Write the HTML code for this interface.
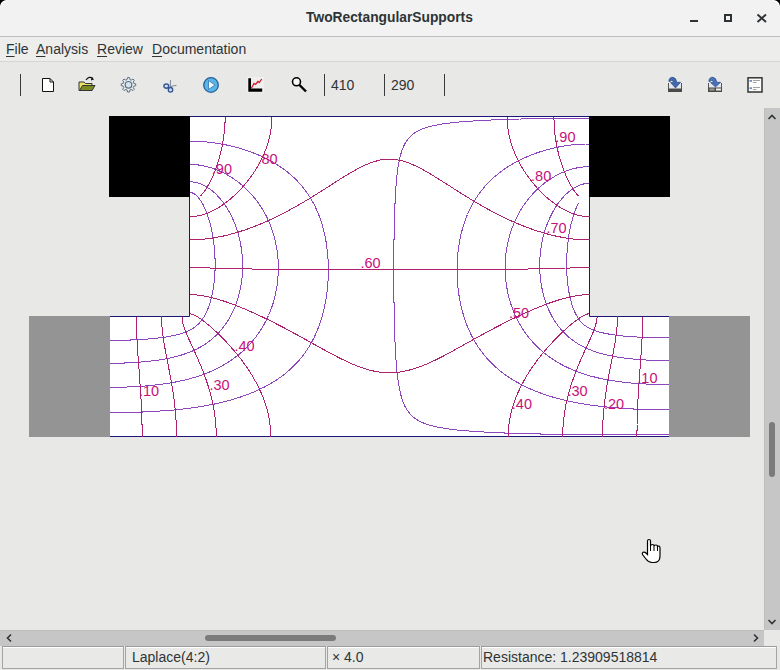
<!DOCTYPE html>
<html><head><meta charset="utf-8">
<style>
*{margin:0;padding:0;box-sizing:border-box}
html,body{width:780px;height:670px;overflow:hidden;background:#e8e8e7;font-family:"Liberation Sans",sans-serif;color:#2e3436}
.abs{position:absolute}
#title{left:0;top:0;width:780px;height:36px;background:#f2f2f2;border-radius:6px 6px 0 0}
#tline{left:0;top:36px;width:780px;height:1px;background:#bdbdbd}
#menubar{left:0;top:37px;width:780px;height:24px;background:#ededec}
#mline{left:0;top:61px;width:780px;height:1px;background:#d6d6d5}
.menu{top:40px;font-size:14px;line-height:18px;color:#2e3436}
.menu u{text-decoration:underline;text-decoration-thickness:1px;text-underline-offset:2px}
.ttxt{font-size:13.8px;line-height:18px;font-weight:bold;color:#2e3436}
.sep{width:1px;height:22px;top:74px;background:#3a3a3a}
.num{top:76px;font-size:14px;line-height:18px;color:#2e3436}
#vscroll{left:764px;top:108px;width:16px;height:522px;background:#c6c6c6;border-left:1px solid #bdbdbd}
#hscroll{left:0;top:630px;width:764px;height:16px;background:#c6c6c6;border-top:1px solid #bdbdbd}
#corner{left:764px;top:630px;width:16px;height:16px;background:#e8e8e7}
#status{left:0;top:646px;width:780px;height:24px;background:#e8e8e7}
.panel{top:646px;height:23px;border:1px solid #a4a4a4;border-top-color:#9c9c9c;box-shadow:inset 0 1px 0 #fff;background:#e9e9e8;font-size:14px;line-height:21px;color:#2e3436;white-space:nowrap}
</style></head><body>
<div class="abs" id="title"></div>
<div class="abs" style="left:0;top:0;width:7px;height:7px;background:radial-gradient(circle at 100% 100%, transparent 5.5px, #fff 6px, #fff 6.5px, #000 7.5px)"></div>
<div class="abs" style="left:773px;top:0;width:7px;height:7px;background:radial-gradient(circle at 0% 100%, transparent 5.5px, #fff 6px, #fff 6.5px, #000 7.5px)"></div>
<div class="abs ttxt" style="left:306px;top:9px;">TwoRectangularSupports</div>
<svg class="abs" style="left:0;top:0" width="780" height="36">
  <rect x="690" y="20" width="8" height="2" fill="#2e3436"/>
  <rect x="725" y="15" width="6" height="6" fill="none" stroke="#2e3436" stroke-width="2"/>
  <path d="M757.5 14.5 L766 22 M766 14.5 L757.5 22" stroke="#2e3436" stroke-width="2"/>
</svg>
<div class="abs" id="tline"></div>
<div class="abs" id="menubar"></div>
<div class="abs" id="mline"></div>
<div class="abs menu" style="left:6px"><u>F</u>ile</div>
<div class="abs menu" style="left:36px"><u>A</u>nalysis</div>
<div class="abs menu" style="left:97px"><u>R</u>eview</div>
<div class="abs menu" style="left:152px"><u>D</u>ocumentation</div>

<!-- toolbar -->
<div class="abs sep" style="left:20px"></div>
<div class="abs sep" style="left:324px"></div>
<div class="abs sep" style="left:384px"></div>
<div class="abs sep" style="left:444px"></div>
<div class="abs num" style="left:331px">410</div>
<div class="abs num" style="left:391px">290</div>
<svg class="abs" style="left:0;top:62px" width="780" height="46" viewBox="0 62 780 46">
  <!-- new doc -->
  <path d="M42.5 78.5 H50 L53.5 82 V91.5 H42.5 Z" fill="#fff" stroke="#111" stroke-width="1"/>
  <path d="M50 78.5 V82 H53.5" fill="none" stroke="#111" stroke-width="1"/>
  <!-- open folder -->
  <path d="M79 82 H84 L85.5 83.5 H92 V90.5 H79 Z" fill="#e8e26a" stroke="#333" stroke-width="1"/>
  <path d="M79.5 90.5 L82.5 85.5 H95 L92 90.5 Z" fill="#7d8a1e" stroke="#333" stroke-width="1"/>
  <path d="M86 80 Q89 75.5 93 78.5" fill="none" stroke="#111" stroke-width="1.2"/>
  <path d="M91.5 77 L94 79.5 L91 80.5 Z" fill="#111"/>
  <!-- gear -->
  <path d="M127.59 77.56 L129.41 77.56 L129.92 79.59 L131.18 80.11 L132.97 79.03 L134.27 80.33 L133.19 82.12 L133.71 83.38 L135.74 83.89 L135.74 85.71 L133.71 86.22 L133.19 87.48 L134.27 89.27 L132.97 90.57 L131.18 89.49 L129.92 90.01 L129.41 92.04 L127.59 92.04 L127.08 90.01 L125.82 89.49 L124.03 90.57 L122.73 89.27 L123.81 87.48 L123.29 86.22 L121.26 85.71 L121.26 83.89 L123.29 83.38 L123.81 82.12 L122.73 80.33 L124.03 79.03 L125.82 80.11 L127.08 79.59 Z" fill="#e6eef3" stroke="#5f6e7b" stroke-width="1"/>
  <circle cx="128.5" cy="84.8" r="3.3" fill="#d6e4ee" stroke="#5f6e7b" stroke-width="1.2"/>
  <!-- scissors -->
  <g>
    <path d="M170.5 80 L170.3 86.5 M176.5 85.3 L170.3 86.5" stroke="#7d8a96" stroke-width="1" fill="none"/>
    <ellipse cx="166.3" cy="86.1" rx="2.4" ry="2.1" fill="#cfe0ff" stroke="#35558f" stroke-width="1.4"/>
    <ellipse cx="170.5" cy="89.8" rx="2.2" ry="2.3" fill="#cfe0ff" stroke="#35558f" stroke-width="1.4"/>
  </g>
  <!-- play -->
  <circle cx="211" cy="85" r="7.3" fill="#5ab4e6" stroke="#235f9a" stroke-width="1.3"/>
  <path d="M208.5 80.5 L215 85 L208.5 89.5 Z" fill="#f4fbff" stroke="#2f74b5" stroke-width="0.8"/>
  <!-- chart -->
  <rect x="247" y="77" width="17" height="16" fill="#efefef"/>
  <path d="M248.3 78.3 H251 V88.6 H262.2 V91.7 H248.3 Z" fill="#000"/>
  <path d="M251.5 88 L254 83.5 L255.5 84.5 L258 81.5 L259.3 82.5 L261.7 79" fill="none" stroke="#d41a2a" stroke-width="1.3"/>
  <!-- magnifier -->
  <circle cx="296.5" cy="81.8" r="4" fill="#f8f8f8" stroke="#000" stroke-width="1.6"/>
  <path d="M299.5 85 L306 91.5" stroke="#000" stroke-width="2.4"/>
  <!-- right icons -->
  <g>
    <path d="M668.5 83 V91.5 H681.5 V83" fill="#e4e8ee" stroke="#555" stroke-width="1"/>
    <rect x="668" y="88.5" width="14" height="3.5" fill="#4a4a4a"/>
    <path d="M668.8 81 Q669.5 76.8 673 77.3 Q676.5 78 676.6 82.3 L680.6 82.3 L675.5 88 L670.6 82.6 L673.6 82.6 Q673.2 80.3 671.5 80.5 Q670 80.8 669.6 82 Z" fill="#3f68ad" stroke="#2a4d8a" stroke-width="0.7"/>
  </g>
  <g>
    <path d="M708.5 83 V91.5 H721.5 V83" fill="#e4e8ee" stroke="#555" stroke-width="1"/>
    <rect x="708" y="87.5" width="14" height="4.5" fill="#4a4a4a"/>
    <rect x="709.5" y="88.5" width="5" height="2" fill="#9aa090"/><rect x="716" y="88.5" width="5" height="2" fill="#f2f4ea"/>
    <path d="M708.8 81 Q709.5 76.8 713 77.3 Q716.5 78 716.6 82.3 L720.6 82.3 L715.5 87 L710.6 82.6 L713.6 82.6 Q713.2 80.3 711.5 80.5 Q710 80.8 709.6 82 Z" fill="#4a72b8" stroke="#2a4d8a" stroke-width="0.7"/>
  </g>
  <g>
    <rect x="748" y="77.8" width="14" height="14.2" fill="#fcfcfc" stroke="#333" stroke-width="1.5"/>
    <rect x="749.5" y="80" width="2.5" height="1.8" fill="#6f8fbf"/>
    <rect x="749.5" y="87.3" width="2.5" height="1.8" fill="#6f8fbf"/>
    <path d="M753 80.5 H760 M753 82.5 H756.5 M753 87.5 H760 M753 89.5 H756.5" stroke="#8a8a8a" stroke-width="0.8"/>
  </g>
</svg>

<!-- plot -->
<svg class="abs" style="left:0;top:0" width="780" height="670">
  <path d="M189.5 116.5 H589.5 V316.5 H669.5 V436.5 H109.5 V316.5 H189.5 Z" fill="#fff" stroke="#1c1478" stroke-width="1"/>
  <g fill="none" stroke="#8c46be" stroke-width="1" shape-rendering="crispEdges"><path d="M109.5 340.4 L111.0 340.4 L112.5 340.4 L114.0 340.3 L115.5 340.3 L117.0 340.3 L118.5 340.3 L120.0 340.3 L121.5 340.2 L123.0 340.2 L124.5 340.2 L126.0 340.1 L127.5 340.1 L129.0 340.0 L130.5 340.0 L132.0 339.9 L133.5 339.9 L135.0 339.8 L136.5 339.7 L138.0 339.7 L139.5 339.6 L141.0 339.5 L142.5 339.4 L144.0 339.3 L145.5 339.2 L147.0 339.1 L148.5 339.0 L150.0 338.9 L151.5 338.7 L153.0 338.6 L154.5 338.4 L156.0 338.3 L157.5 338.1 L159.0 337.9 L160.5 337.7 L162.0 337.5 L163.5 337.3 L165.0 337.1 L166.5 336.9 L168.0 336.6 L169.5 336.4 L171.0 336.1 L172.5 335.8 L174.0 335.5 L175.5 335.1 L177.0 334.7 L178.5 334.3 L180.0 333.9 L181.5 333.5 L183.0 333.0 L184.5 332.4 L186.0 331.9 L187.5 331.2 L189.0 330.5 L190.5 329.8 L191.8 329.0 L193.5 328.0 L194.9 327.0 L196.2 326.0 L197.3 325.0 L198.5 323.9 L199.8 322.5 L201.0 321.1 L202.0 319.8 L202.9 318.5 L203.9 317.0 L204.8 315.5 L205.5 314.1 L206.3 312.5 L207.0 311.0 L207.6 309.5 L208.2 308.0 L208.8 306.5 L209.3 305.0 L209.8 303.5 L210.2 302.0 L210.7 300.5 L211.1 299.0 L211.4 297.5 L211.8 296.0 L212.1 294.5 L212.4 293.0 L212.7 291.5 L213.0 290.0 L213.2 288.5 L213.5 287.0 L213.7 285.5 L213.9 284.0 L214.1 282.5 L214.2 281.0 L214.4 279.5 L214.5 278.0 L214.6 276.5 L214.8 275.0 L214.8 273.5 L214.9 272.0 L215.0 270.5 L215.0 269.0 L215.1 267.5 L215.1 266.0 L215.1 264.5 L215.1 263.0 L215.1 261.5 L215.0 260.0 L215.0 258.5 L214.9 257.0 L214.9 255.5 L214.8 254.0 L214.7 252.5 L214.6 251.0 L214.5 249.5 L214.3 248.0 L214.2 246.5 L214.0 245.0 L213.8 243.5 L213.6 242.0 L213.4 240.5 L213.2 239.0 L213.0 237.5 L212.7 236.0 L212.5 234.5 L212.2 233.0 L211.9 231.5 L211.6 230.0 L211.3 228.5 L210.9 227.0 L210.5 225.5 L210.2 224.0 L209.8 222.5 L209.3 221.0 L208.9 219.5 L208.4 218.0 L207.9 216.5 L207.4 215.0 L206.9 213.5 L206.3 212.0 L205.7 210.5 L205.1 209.0 L204.4 207.5 L203.7 206.0 L203.0 204.6 L202.1 203.0 L201.2 201.5 L200.2 200.0 L199.1 198.5 L198.0 197.2 L196.9 196.0 L195.5 194.8 L194.0 193.7 L192.5 193.0 L191.0 192.6 L189.5 192.4 M109.5 363.2 L111.0 363.2 L112.5 363.2 L114.0 363.2 L115.5 363.2 L117.0 363.2 L118.5 363.2 L120.0 363.1 L121.5 363.1 L123.0 363.0 L124.5 363.0 L126.0 362.9 L127.5 362.9 L129.0 362.8 L130.5 362.7 L132.0 362.7 L133.5 362.6 L135.0 362.5 L136.5 362.4 L138.0 362.3 L139.5 362.2 L141.0 362.0 L142.5 361.9 L144.0 361.8 L145.5 361.6 L147.0 361.5 L148.5 361.3 L150.0 361.2 L151.5 361.0 L153.0 360.8 L154.5 360.6 L156.0 360.4 L157.5 360.2 L159.0 360.0 L160.5 359.8 L162.0 359.5 L163.5 359.3 L165.0 359.0 L166.5 358.7 L168.0 358.4 L169.5 358.1 L171.0 357.8 L172.5 357.4 L174.0 357.1 L175.5 356.7 L177.0 356.3 L178.5 355.9 L180.0 355.5 L181.5 355.0 L183.0 354.5 L184.5 354.0 L186.0 353.5 L187.4 353.0 L189.0 352.4 L190.5 351.8 L192.0 351.2 L193.5 350.5 L195.0 349.8 L196.5 349.1 L198.0 348.3 L199.5 347.5 L201.0 346.7 L202.5 345.8 L203.8 345.0 L205.4 344.0 L206.8 343.0 L208.2 342.0 L209.5 341.0 L210.8 340.0 L212.0 339.0 L213.2 338.0 L214.3 337.0 L215.5 335.9 L217.0 334.5 L218.4 333.0 L219.5 331.8 L220.5 330.7 L221.5 329.5 L222.5 328.3 L223.5 327.0 L224.5 325.7 L225.5 324.3 L226.4 323.0 L227.4 321.5 L228.3 320.0 L229.2 318.5 L230.0 317.1 L230.9 315.5 L231.7 314.0 L232.4 312.5 L233.1 311.0 L233.8 309.5 L234.4 308.0 L235.1 306.5 L235.6 305.0 L236.2 303.5 L236.7 302.0 L237.2 300.5 L237.7 299.0 L238.2 297.5 L238.6 296.0 L239.0 294.5 L239.4 293.0 L239.7 291.5 L240.1 290.0 L240.4 288.5 L240.7 287.0 L241.0 285.5 L241.2 284.0 L241.4 282.5 L241.6 281.0 L241.8 279.5 L242.0 278.0 L242.1 276.5 L242.3 275.0 L242.4 273.5 L242.5 272.0 L242.5 270.5 L242.6 269.0 L242.6 267.5 L242.6 266.0 L242.6 264.5 L242.6 263.0 L242.5 261.5 L242.5 260.0 L242.4 258.5 L242.3 257.0 L242.2 255.5 L242.0 254.0 L241.9 252.5 L241.7 251.0 L241.5 249.5 L241.3 248.0 L241.0 246.5 L240.8 245.0 L240.5 243.5 L240.2 242.0 L239.9 240.5 L239.6 239.0 L239.2 237.5 L238.8 236.0 L238.4 234.5 L238.0 233.0 L237.5 231.5 L237.0 230.0 L236.5 228.5 L236.0 227.0 L235.5 225.6 L234.9 224.0 L234.3 222.5 L233.7 221.0 L233.0 219.5 L232.3 218.0 L231.6 216.5 L230.9 215.0 L230.1 213.5 L229.3 212.0 L228.5 210.7 L227.5 209.0 L226.6 207.5 L225.6 206.0 L224.6 204.5 L223.5 203.0 L222.5 201.6 L221.5 200.4 L220.5 199.2 L219.5 198.0 L218.5 196.9 L217.2 195.5 L216.0 194.3 L214.7 193.0 L213.5 192.0 L212.4 191.0 L211.1 190.0 L209.8 189.0 L208.5 188.1 L207.0 187.2 L205.5 186.3 L204.1 185.5 L202.5 184.7 L201.0 184.1 L199.5 183.5 L198.0 183.1 L196.5 182.7 L195.0 182.3 L193.5 182.1 L192.0 181.9 L190.5 181.8 L189.5 181.8 M109.5 387.3 L111.0 387.3 L112.5 387.3 L114.0 387.3 L115.5 387.3 L117.0 387.3 L118.5 387.3 L120.0 387.2 L121.5 387.2 L123.0 387.2 L124.5 387.1 L126.0 387.1 L127.5 387.0 L129.0 386.9 L130.5 386.9 L132.0 386.8 L133.5 386.7 L135.0 386.7 L136.5 386.6 L138.0 386.5 L139.5 386.4 L141.0 386.3 L142.5 386.2 L144.0 386.1 L145.5 386.0 L147.0 385.8 L148.5 385.7 L150.0 385.6 L151.5 385.4 L153.0 385.3 L154.5 385.1 L156.0 384.9 L157.5 384.8 L159.0 384.6 L160.5 384.4 L162.0 384.2 L163.5 384.0 L165.0 383.8 L166.5 383.5 L168.0 383.3 L169.5 383.1 L171.0 382.8 L172.5 382.6 L174.0 382.3 L175.5 382.0 L177.0 381.7 L178.5 381.4 L180.0 381.1 L181.5 380.8 L183.0 380.4 L184.5 380.1 L186.0 379.7 L187.5 379.3 L189.0 378.9 L190.5 378.5 L192.0 378.1 L193.5 377.7 L195.0 377.2 L196.5 376.8 L198.0 376.3 L199.5 375.8 L201.0 375.3 L202.5 374.7 L204.0 374.2 L205.5 373.6 L207.0 373.0 L208.5 372.4 L210.0 371.8 L211.5 371.1 L212.9 370.5 L214.5 369.7 L216.0 369.0 L217.5 368.3 L219.0 367.5 L220.5 366.7 L222.0 365.9 L223.5 365.0 L225.0 364.2 L226.5 363.3 L228.0 362.3 L229.3 361.5 L230.8 360.5 L232.2 359.5 L233.5 358.6 L235.0 357.5 L236.3 356.5 L237.5 355.6 L238.8 354.5 L240.0 353.5 L241.2 352.5 L242.3 351.5 L243.5 350.4 L245.0 349.0 L246.5 347.6 L248.0 346.0 L249.5 344.5 L250.5 343.4 L251.5 342.2 L252.5 341.1 L253.5 339.9 L254.5 338.6 L255.5 337.4 L256.5 336.0 L257.5 334.7 L258.5 333.3 L259.4 332.0 L260.4 330.5 L261.3 329.0 L262.2 327.5 L263.1 326.0 L264.0 324.5 L264.8 323.0 L265.6 321.5 L266.4 320.0 L267.1 318.5 L267.8 317.0 L268.5 315.5 L269.1 314.0 L269.8 312.5 L270.4 311.0 L270.9 309.5 L271.5 308.0 L272.0 306.5 L272.5 305.1 L273.0 303.5 L273.5 302.0 L273.9 300.5 L274.3 299.0 L274.7 297.5 L275.1 296.0 L275.4 294.5 L275.7 293.0 L276.0 291.5 L276.3 290.0 L276.6 288.5 L276.8 287.0 L277.1 285.5 L277.3 284.0 L277.5 282.5 L277.6 281.0 L277.8 279.5 L277.9 278.0 L278.0 276.5 L278.1 275.0 L278.2 273.5 L278.3 272.0 L278.3 270.5 L278.3 269.0 L278.3 267.5 L278.3 266.0 L278.3 264.5 L278.2 263.0 L278.2 261.5 L278.1 260.0 L278.0 258.5 L277.8 257.0 L277.7 255.5 L277.5 254.0 L277.3 252.5 L277.1 251.0 L276.9 249.5 L276.7 248.0 L276.4 246.5 L276.1 245.0 L275.8 243.5 L275.5 242.0 L275.2 240.5 L274.8 239.0 L274.4 237.5 L274.0 236.0 L273.6 234.5 L273.1 233.0 L272.6 231.5 L272.1 230.0 L271.6 228.5 L271.0 227.0 L270.5 225.6 L269.9 224.0 L269.2 222.5 L268.6 221.0 L267.9 219.5 L267.2 218.0 L266.5 216.6 L265.7 215.0 L264.9 213.5 L264.0 212.0 L263.2 210.5 L262.3 209.0 L261.3 207.5 L260.5 206.2 L259.5 204.7 L258.5 203.3 L257.6 202.0 L256.5 200.5 L255.5 199.3 L254.5 198.0 L253.5 196.8 L252.5 195.6 L251.5 194.5 L250.1 193.0 L249.0 191.8 L247.7 190.5 L246.5 189.3 L245.1 188.0 L244.0 187.0 L242.5 185.6 L241.2 184.5 L240.0 183.5 L238.7 182.5 L237.4 181.5 L236.0 180.5 L234.6 179.5 L233.2 178.5 L231.6 177.5 L230.0 176.5 L228.5 175.6 L227.0 174.7 L225.7 174.0 L224.0 173.1 L222.5 172.4 L221.0 171.7 L219.5 171.0 L218.0 170.3 L216.5 169.7 L215.0 169.2 L213.5 168.6 L212.0 168.1 L210.5 167.6 L209.0 167.2 L207.5 166.8 L206.0 166.4 L204.5 166.1 L203.0 165.8 L201.5 165.5 L200.0 165.3 L198.5 165.0 L197.0 164.9 L195.5 164.7 L194.0 164.6 L192.5 164.5 L191.0 164.5 L189.5 164.5 M109.5 412.6 L111.0 412.6 L112.5 412.6 L114.0 412.6 L115.5 412.6 L117.0 412.6 L118.5 412.6 L120.0 412.5 L121.5 412.5 L123.0 412.5 L124.5 412.5 L126.0 412.5 L127.5 412.4 L129.0 412.4 L130.5 412.4 L132.0 412.3 L133.5 412.3 L135.0 412.2 L136.5 412.2 L138.0 412.2 L139.5 412.1 L141.0 412.0 L142.5 412.0 L144.0 411.9 L145.5 411.9 L147.0 411.8 L148.5 411.7 L150.0 411.7 L151.5 411.6 L153.0 411.5 L154.5 411.4 L156.0 411.3 L157.5 411.2 L159.0 411.1 L160.5 411.0 L162.0 410.9 L163.5 410.8 L165.0 410.7 L166.5 410.6 L168.0 410.5 L169.5 410.4 L171.0 410.2 L172.5 410.1 L174.0 410.0 L175.5 409.8 L177.0 409.7 L178.5 409.5 L180.0 409.4 L181.5 409.2 L183.0 409.0 L184.5 408.8 L186.0 408.7 L187.5 408.5 L189.0 408.3 L190.5 408.1 L192.0 407.9 L193.5 407.7 L195.0 407.5 L196.5 407.2 L198.0 407.0 L199.5 406.8 L201.0 406.5 L202.5 406.3 L204.0 406.0 L205.5 405.8 L207.0 405.5 L208.5 405.2 L210.0 404.9 L211.5 404.6 L213.0 404.3 L214.5 404.0 L216.0 403.7 L217.5 403.3 L219.0 403.0 L220.5 402.7 L222.0 402.3 L223.5 401.9 L225.0 401.6 L226.5 401.2 L228.0 400.8 L229.5 400.4 L231.0 399.9 L232.5 399.5 L234.0 399.1 L235.5 398.6 L237.0 398.1 L238.5 397.7 L240.0 397.2 L241.5 396.7 L243.0 396.1 L244.5 395.6 L246.0 395.1 L247.5 394.5 L249.0 393.9 L250.5 393.3 L252.0 392.7 L253.5 392.1 L254.9 391.5 L256.5 390.8 L258.0 390.1 L259.5 389.4 L261.0 388.7 L262.4 388.0 L264.0 387.2 L265.4 386.5 L267.0 385.6 L268.5 384.8 L269.9 384.0 L271.5 383.1 L273.0 382.2 L274.5 381.2 L276.0 380.3 L277.5 379.3 L279.0 378.2 L280.5 377.2 L282.0 376.1 L283.4 375.0 L284.7 374.0 L286.0 373.0 L287.2 372.0 L288.3 371.0 L289.5 370.0 L291.0 368.6 L292.2 367.5 L293.5 366.2 L294.7 365.0 L296.0 363.7 L297.1 362.5 L298.5 361.0 L299.5 359.8 L300.5 358.6 L301.5 357.4 L302.5 356.1 L303.5 354.8 L304.5 353.5 L305.5 352.1 L306.5 350.6 L307.5 349.1 L308.5 347.5 L309.5 346.0 L310.3 344.5 L311.2 343.0 L312.0 341.5 L312.8 340.0 L313.6 338.5 L314.3 337.0 L315.0 335.6 L315.7 334.0 L316.4 332.5 L317.0 331.1 L317.7 329.5 L318.2 328.0 L318.8 326.5 L319.4 325.0 L319.9 323.5 L320.4 322.0 L320.9 320.5 L321.4 319.0 L321.8 317.5 L322.3 316.0 L322.7 314.5 L323.1 313.0 L323.4 311.5 L323.8 310.0 L324.2 308.5 L324.5 307.0 L324.8 305.5 L325.1 304.0 L325.4 302.5 L325.7 301.0 L325.9 299.5 L326.2 298.0 L326.4 296.5 L326.6 295.0 L326.8 293.5 L327.0 292.0 L327.2 290.5 L327.4 289.0 L327.5 287.5 L327.7 286.0 L327.8 284.5 L327.9 283.0 L328.0 281.5 L328.1 280.0 L328.2 278.5 L328.2 277.0 L328.3 275.5 L328.3 274.0 L328.3 272.5 L328.3 271.0 L328.3 269.5 L328.3 268.0 L328.3 266.5 L328.3 265.0 L328.2 263.5 L328.2 262.0 L328.1 260.5 L328.0 259.0 L327.9 257.5 L327.8 256.0 L327.7 254.5 L327.5 253.0 L327.4 251.5 L327.2 250.0 L327.0 248.5 L326.8 247.0 L326.6 245.5 L326.4 244.0 L326.2 242.5 L325.9 241.0 L325.6 239.5 L325.4 238.0 L325.1 236.5 L324.7 235.0 L324.4 233.5 L324.1 232.0 L323.7 230.5 L323.3 229.0 L322.9 227.5 L322.5 226.0 L322.1 224.5 L321.6 223.0 L321.1 221.5 L320.6 220.0 L320.1 218.5 L319.6 217.0 L319.0 215.5 L318.4 214.0 L317.8 212.5 L317.1 211.0 L316.5 209.5 L315.8 208.0 L315.1 206.5 L314.3 205.0 L313.6 203.5 L312.7 202.0 L312.0 200.7 L311.0 199.0 L310.1 197.5 L309.2 196.0 L308.2 194.5 L307.2 193.0 L306.1 191.5 L305.0 190.0 L304.0 188.7 L303.0 187.5 L302.0 186.2 L301.0 185.0 L300.0 183.9 L298.7 182.5 L297.5 181.2 L296.3 180.0 L295.0 178.7 L293.8 177.5 L292.5 176.3 L291.0 175.0 L289.8 174.0 L288.6 173.0 L287.4 172.0 L286.1 171.0 L284.8 170.0 L283.5 169.0 L282.0 168.0 L280.6 167.0 L279.1 166.0 L277.5 165.0 L276.0 164.0 L274.5 163.1 L273.0 162.3 L271.7 161.5 L270.0 160.6 L268.5 159.8 L267.0 159.0 L265.5 158.3 L264.0 157.5 L262.5 156.8 L261.0 156.1 L259.6 155.5 L258.0 154.8 L256.5 154.2 L255.0 153.6 L253.5 153.0 L252.0 152.4 L250.5 151.9 L249.0 151.3 L247.5 150.8 L246.0 150.3 L244.5 149.8 L243.0 149.3 L241.5 148.9 L240.0 148.4 L238.6 148.0 L237.0 147.6 L235.5 147.2 L234.0 146.8 L232.5 146.4 L231.0 146.0 L229.5 145.7 L228.0 145.4 L226.5 145.0 L225.0 144.7 L223.5 144.4 L222.0 144.1 L220.5 143.9 L219.0 143.6 L217.5 143.4 L216.0 143.1 L214.5 142.9 L213.0 142.7 L211.5 142.5 L210.0 142.4 L208.5 142.2 L207.0 142.0 L205.5 141.9 L204.0 141.8 L202.5 141.6 L201.0 141.5 L199.5 141.4 L198.0 141.4 L196.5 141.3 L195.0 141.2 L193.5 141.2 L192.0 141.2 L190.5 141.2 L189.5 141.2 M669.5 409.8 L668.0 409.8 L666.5 409.8 L665.0 409.8 L663.5 409.8 L662.0 409.7 L660.5 409.7 L659.0 409.7 L657.5 409.7 L656.0 409.7 L654.5 409.6 L653.0 409.6 L651.5 409.6 L650.0 409.5 L648.5 409.5 L647.0 409.5 L645.5 409.4 L644.0 409.4 L642.5 409.3 L641.0 409.3 L639.5 409.2 L638.0 409.2 L636.5 409.1 L635.0 409.0 L633.5 409.0 L632.0 408.9 L630.5 408.8 L629.0 408.7 L627.5 408.6 L626.0 408.5 L624.5 408.5 L623.0 408.4 L621.5 408.3 L620.0 408.1 L618.5 408.0 L617.0 407.9 L615.5 407.8 L614.0 407.7 L612.5 407.5 L611.0 407.4 L609.5 407.3 L608.0 407.1 L606.5 407.0 L605.0 406.8 L603.5 406.7 L602.0 406.5 L600.5 406.3 L599.0 406.2 L597.5 406.0 L596.0 405.8 L594.5 405.6 L593.0 405.4 L591.5 405.2 L590.0 405.0 L588.5 404.7 L587.0 404.5 L585.5 404.3 L584.0 404.0 L582.5 403.8 L581.0 403.5 L579.5 403.3 L578.0 403.0 L576.5 402.7 L575.0 402.4 L573.5 402.1 L572.0 401.8 L570.5 401.5 L569.0 401.2 L567.5 400.9 L566.0 400.5 L564.5 400.2 L563.0 399.8 L561.5 399.4 L560.0 399.0 L558.5 398.6 L557.0 398.2 L555.5 397.8 L554.0 397.4 L552.5 397.0 L551.0 396.5 L549.5 396.1 L548.0 395.6 L546.5 395.1 L545.0 394.6 L543.5 394.1 L542.0 393.5 L540.5 393.0 L539.0 392.5 L537.5 391.9 L536.0 391.3 L534.5 390.7 L533.0 390.1 L531.5 389.4 L530.0 388.8 L528.5 388.1 L527.0 387.4 L525.5 386.7 L524.1 386.0 L522.5 385.2 L521.1 384.5 L519.5 383.6 L518.0 382.8 L516.5 382.0 L515.0 381.1 L513.5 380.2 L512.0 379.3 L510.5 378.4 L509.2 377.5 L507.7 376.5 L506.3 375.5 L505.0 374.6 L503.5 373.5 L502.2 372.5 L500.9 371.5 L499.7 370.5 L498.4 369.5 L497.3 368.5 L496.1 367.5 L495.0 366.5 L493.5 365.1 L492.4 364.0 L491.0 362.7 L489.9 361.5 L488.5 360.0 L487.1 358.5 L486.0 357.2 L485.0 356.1 L484.0 354.9 L483.0 353.6 L482.0 352.3 L481.0 351.0 L480.0 349.6 L479.0 348.2 L478.0 346.7 L477.0 345.1 L476.0 343.5 L475.1 342.0 L474.2 340.5 L473.4 339.0 L472.5 337.5 L471.8 336.0 L471.0 334.5 L470.3 333.0 L469.6 331.5 L468.9 330.0 L468.3 328.5 L467.6 327.0 L467.0 325.5 L466.4 324.0 L465.9 322.5 L465.4 321.0 L464.8 319.5 L464.3 318.0 L463.9 316.5 L463.4 315.0 L463.0 313.5 L462.5 312.0 L462.1 310.5 L461.8 309.0 L461.4 307.5 L461.0 306.0 L460.7 304.5 L460.4 303.0 L460.1 301.5 L459.8 300.0 L459.5 298.5 L459.3 297.0 L459.0 295.5 L458.8 294.0 L458.6 292.5 L458.4 291.0 L458.2 289.5 L458.0 288.0 L457.9 286.5 L457.7 285.0 L457.6 283.5 L457.5 282.0 L457.4 280.5 L457.3 279.0 L457.2 277.5 L457.2 276.0 L457.1 274.5 L457.1 273.0 L457.1 271.5 L457.1 270.0 L457.1 268.5 L457.1 267.0 L457.1 265.5 L457.2 264.0 L457.2 262.5 L457.3 261.0 L457.4 259.5 L457.5 258.0 L457.6 256.5 L457.7 255.0 L457.9 253.5 L458.0 252.0 L458.2 250.5 L458.4 249.0 L458.6 247.5 L458.8 246.0 L459.1 244.5 L459.3 243.0 L459.6 241.5 L459.8 240.0 L460.1 238.5 L460.5 237.0 L460.8 235.5 L461.1 234.0 L461.5 232.5 L461.9 231.0 L462.3 229.5 L462.7 228.0 L463.2 226.5 L463.6 225.0 L464.1 223.5 L464.6 222.0 L465.1 220.5 L465.7 219.0 L466.2 217.5 L466.8 216.0 L467.5 214.5 L468.1 213.0 L468.8 211.5 L469.5 210.0 L470.2 208.5 L471.0 207.0 L471.7 205.5 L472.5 204.1 L473.4 202.5 L474.3 201.0 L475.2 199.5 L476.2 198.0 L477.0 196.7 L478.0 195.3 L478.9 194.0 L480.0 192.5 L481.0 191.2 L482.0 189.9 L483.0 188.7 L484.0 187.5 L485.0 186.3 L486.0 185.2 L487.1 184.0 L488.5 182.5 L490.0 181.0 L491.5 179.6 L492.7 178.5 L494.0 177.3 L495.5 176.0 L496.7 175.0 L497.9 174.0 L499.2 173.0 L500.5 172.0 L501.8 171.0 L503.2 170.0 L504.5 169.1 L506.0 168.1 L507.5 167.1 L509.0 166.1 L510.5 165.2 L512.0 164.3 L513.4 163.5 L515.0 162.6 L516.5 161.8 L518.0 161.0 L519.5 160.3 L521.0 159.5 L522.5 158.8 L524.0 158.1 L525.5 157.4 L527.0 156.8 L528.5 156.1 L530.0 155.5 L531.5 154.9 L533.0 154.3 L534.5 153.8 L536.0 153.2 L537.5 152.7 L539.0 152.2 L540.5 151.7 L542.0 151.2 L543.5 150.8 L545.0 150.3 L546.5 149.9 L548.0 149.5 L549.5 149.1 L551.0 148.7 L552.5 148.4 L554.0 148.0 L555.5 147.7 L557.0 147.3 L558.5 147.0 L560.0 146.7 L561.5 146.5 L563.0 146.2 L564.5 146.0 L566.0 145.7 L567.5 145.5 L569.0 145.3 L570.5 145.1 L572.0 144.9 L573.5 144.8 L575.0 144.6 L576.5 144.5 L578.0 144.4 L579.5 144.3 L581.0 144.2 L582.5 144.1 L584.0 144.1 L585.5 144.0 L587.0 144.0 L588.5 144.0 L589.5 144.0 M669.5 384.6 L668.0 384.6 L666.5 384.6 L665.0 384.6 L663.5 384.6 L662.0 384.6 L660.5 384.5 L659.0 384.5 L657.5 384.5 L656.0 384.4 L654.5 384.4 L653.0 384.3 L651.5 384.3 L650.0 384.2 L648.5 384.2 L647.0 384.1 L645.5 384.0 L644.0 383.9 L642.5 383.8 L641.0 383.7 L639.5 383.6 L638.0 383.5 L636.5 383.4 L635.0 383.3 L633.5 383.2 L632.0 383.1 L630.5 382.9 L629.0 382.8 L627.5 382.6 L626.0 382.5 L624.5 382.3 L623.0 382.1 L621.5 382.0 L620.0 381.8 L618.5 381.6 L617.0 381.4 L615.5 381.1 L614.0 380.9 L612.5 380.7 L611.0 380.4 L609.5 380.2 L608.0 379.9 L606.5 379.7 L605.0 379.4 L603.5 379.1 L602.0 378.8 L600.5 378.5 L599.0 378.1 L597.5 377.8 L596.0 377.4 L594.5 377.0 L593.0 376.7 L591.5 376.3 L590.0 375.9 L588.5 375.4 L587.0 375.0 L585.5 374.5 L584.0 374.0 L582.5 373.6 L581.0 373.0 L579.5 372.5 L578.0 372.0 L576.5 371.4 L575.0 370.8 L573.5 370.2 L572.0 369.6 L570.5 368.9 L569.0 368.2 L567.5 367.5 L566.0 366.8 L564.5 366.1 L563.0 365.3 L561.5 364.5 L560.0 363.7 L558.5 362.8 L557.1 362.0 L555.5 361.0 L554.0 360.1 L552.5 359.1 L551.0 358.1 L549.5 357.0 L548.1 356.0 L546.8 355.0 L545.5 354.0 L544.2 353.0 L543.0 352.0 L541.9 351.0 L540.7 350.0 L539.5 348.9 L538.0 347.5 L536.5 346.0 L535.0 344.5 L533.6 343.0 L532.5 341.8 L531.5 340.7 L530.5 339.5 L529.5 338.3 L528.5 337.1 L527.5 335.8 L526.5 334.5 L525.5 333.1 L524.5 331.7 L523.5 330.2 L522.5 328.7 L521.5 327.1 L520.5 325.5 L519.7 324.0 L518.8 322.5 L518.0 321.0 L517.2 319.5 L516.5 318.0 L515.8 316.5 L515.1 315.0 L514.4 313.5 L513.8 312.0 L513.2 310.5 L512.6 309.0 L512.1 307.5 L511.5 306.0 L511.0 304.5 L510.5 303.0 L510.1 301.5 L509.6 300.0 L509.2 298.5 L508.8 297.0 L508.4 295.5 L508.1 294.0 L507.8 292.5 L507.5 291.0 L507.2 289.5 L506.9 288.0 L506.6 286.5 L506.4 285.0 L506.2 283.5 L506.0 282.0 L505.9 280.5 L505.7 279.0 L505.6 277.5 L505.5 276.0 L505.4 274.5 L505.3 273.0 L505.2 271.5 L505.2 270.0 L505.2 268.5 L505.2 267.0 L505.2 265.5 L505.2 264.0 L505.3 262.5 L505.4 261.0 L505.5 259.5 L505.6 258.0 L505.7 256.5 L505.9 255.0 L506.0 253.5 L506.2 252.0 L506.4 250.5 L506.7 249.0 L506.9 247.5 L507.2 246.0 L507.5 244.5 L507.8 243.0 L508.1 241.5 L508.5 240.0 L508.8 238.5 L509.2 237.0 L509.7 235.5 L510.1 234.0 L510.6 232.5 L511.0 231.0 L511.6 229.5 L512.1 228.0 L512.7 226.5 L513.2 225.0 L513.9 223.5 L514.5 222.0 L515.2 220.5 L515.9 219.0 L516.6 217.5 L517.4 216.0 L518.1 214.5 L519.0 213.0 L519.8 211.5 L520.7 210.0 L521.5 208.7 L522.5 207.1 L523.5 205.6 L524.5 204.2 L525.5 202.8 L526.4 201.5 L527.5 200.1 L528.5 198.8 L529.5 197.6 L530.5 196.4 L531.5 195.3 L532.7 194.0 L534.0 192.6 L535.1 191.5 L536.5 190.1 L537.6 189.0 L539.0 187.7 L540.4 186.5 L541.6 185.5 L542.8 184.5 L544.0 183.5 L545.3 182.5 L546.7 181.5 L548.0 180.6 L549.5 179.6 L551.0 178.6 L552.5 177.7 L554.0 176.8 L555.3 176.0 L557.0 175.1 L558.5 174.3 L560.0 173.6 L561.5 172.9 L563.0 172.3 L564.5 171.6 L566.0 171.1 L567.5 170.5 L569.0 170.0 L570.5 169.5 L572.0 169.1 L573.5 168.7 L575.0 168.3 L576.5 168.0 L578.0 167.7 L579.5 167.5 L581.0 167.3 L582.5 167.1 L584.0 166.9 L585.5 166.8 L587.0 166.7 L588.5 166.7 L589.5 166.7 M669.5 360.7 L668.0 360.7 L666.5 360.7 L665.0 360.6 L663.5 360.6 L662.0 360.6 L660.5 360.6 L659.0 360.5 L657.5 360.5 L656.0 360.5 L654.5 360.4 L653.0 360.4 L651.5 360.3 L650.0 360.2 L648.5 360.2 L647.0 360.1 L645.5 360.0 L644.0 359.9 L642.5 359.8 L641.0 359.7 L639.5 359.6 L638.0 359.5 L636.5 359.4 L635.0 359.2 L633.5 359.1 L632.0 358.9 L630.5 358.8 L629.0 358.6 L627.5 358.4 L626.0 358.3 L624.5 358.1 L623.0 357.9 L621.5 357.7 L620.0 357.4 L618.5 357.2 L617.0 357.0 L615.5 356.7 L614.0 356.4 L612.5 356.1 L611.0 355.8 L609.5 355.5 L608.0 355.2 L606.5 354.9 L605.0 354.5 L603.5 354.1 L602.0 353.7 L600.5 353.3 L599.0 352.9 L597.5 352.4 L596.0 351.9 L594.5 351.4 L593.0 350.9 L591.5 350.3 L590.0 349.7 L588.5 349.1 L587.1 348.5 L585.5 347.8 L584.0 347.0 L582.5 346.3 L581.0 345.5 L579.5 344.7 L578.0 343.8 L576.5 342.8 L575.2 342.0 L573.8 341.0 L572.5 340.1 L571.1 339.0 L569.8 338.0 L568.6 337.0 L567.5 336.0 L566.0 334.6 L564.8 333.5 L563.5 332.1 L562.4 331.0 L561.1 329.5 L560.0 328.2 L559.0 327.0 L558.0 325.7 L557.0 324.3 L556.1 323.0 L555.1 321.5 L554.1 320.0 L553.2 318.5 L552.3 317.0 L551.5 315.5 L550.7 314.0 L550.0 312.6 L549.2 311.0 L548.6 309.5 L547.9 308.0 L547.3 306.5 L546.7 305.0 L546.1 303.5 L545.6 302.0 L545.1 300.5 L544.6 299.0 L544.2 297.5 L543.7 296.0 L543.3 294.5 L543.0 293.0 L542.6 291.5 L542.3 290.0 L542.0 288.5 L541.7 287.0 L541.4 285.5 L541.1 284.0 L540.9 282.5 L540.7 281.0 L540.5 279.5 L540.4 278.0 L540.2 276.5 L540.1 275.0 L540.0 273.5 L539.9 272.0 L539.8 270.5 L539.8 269.0 L539.7 267.5 L539.7 266.0 L539.7 264.5 L539.7 263.0 L539.8 261.5 L539.8 260.0 L539.9 258.5 L540.0 257.0 L540.1 255.5 L540.3 254.0 L540.4 252.5 L540.6 251.0 L540.8 249.5 L541.0 248.0 L541.2 246.5 L541.5 245.0 L541.8 243.5 L542.0 242.0 L542.4 240.5 L542.7 239.0 L543.0 237.5 L543.4 236.0 L543.8 234.5 L544.2 233.0 L544.7 231.5 L545.1 230.0 L545.6 228.5 L546.1 227.0 L546.7 225.5 L547.2 224.0 L547.8 222.5 L548.4 221.0 L549.1 219.5 L549.7 218.0 L550.5 216.5 L551.2 215.0 L552.0 213.5 L552.8 212.0 L553.5 210.7 L554.5 209.0 L555.4 207.5 L556.4 206.0 L557.4 204.5 L558.4 203.0 L559.5 201.6 L560.5 200.3 L561.5 199.1 L562.5 197.9 L563.8 196.5 L565.0 195.2 L566.2 194.0 L567.5 192.9 L569.0 191.6 L570.3 190.5 L571.7 189.5 L573.0 188.6 L574.5 187.7 L576.0 186.9 L577.5 186.1 L578.9 185.5 L580.5 184.9 L582.0 184.4 L583.5 184.0 L585.0 183.7 L586.5 183.5 L588.0 183.4 L589.5 183.3 M669.5 337.9 L668.0 337.9 L666.5 337.9 L665.0 337.9 L663.5 337.9 L662.0 337.9 L660.5 337.8 L659.0 337.8 L657.5 337.8 L656.0 337.8 L654.5 337.7 L653.0 337.7 L651.5 337.7 L650.0 337.6 L648.5 337.6 L647.0 337.5 L645.5 337.5 L644.0 337.4 L642.5 337.3 L641.0 337.3 L639.5 337.2 L638.0 337.1 L636.5 337.0 L635.0 336.9 L633.5 336.8 L632.0 336.7 L630.5 336.6 L629.0 336.5 L627.5 336.4 L626.0 336.3 L624.5 336.1 L623.0 336.0 L621.5 335.8 L620.0 335.7 L618.5 335.5 L617.0 335.3 L615.5 335.1 L614.0 334.9 L612.5 334.7 L611.0 334.4 L609.5 334.2 L608.0 333.9 L606.5 333.6 L605.0 333.3 L603.5 333.0 L602.0 332.7 L600.5 332.3 L599.0 331.9 L597.5 331.4 L596.0 330.9 L594.5 330.4 L593.0 329.8 L591.5 329.2 L590.0 328.5 L588.5 327.7 L587.0 326.9 L585.7 326.0 L584.3 325.0 L583.1 324.0 L582.0 322.9 L580.6 321.5 L579.5 320.1 L578.5 318.8 L577.7 317.5 L576.8 316.0 L576.0 314.6 L575.2 313.0 L574.5 311.5 L573.9 310.0 L573.3 308.5 L572.7 307.0 L572.2 305.5 L571.8 304.0 L571.3 302.5 L570.9 301.0 L570.5 299.5 L570.2 298.0 L569.8 296.5 L569.5 295.0 L569.2 293.5 L568.9 292.0 L568.7 290.5 L568.4 289.0 L568.2 287.5 L568.0 286.0 L567.8 284.5 L567.6 283.0 L567.5 281.5 L567.3 280.0 L567.2 278.5 L567.1 277.0 L567.0 275.5 L566.9 274.0 L566.8 272.5 L566.8 271.0 L566.7 269.5 L566.7 268.0 L566.6 266.5 L566.6 265.0 L566.6 263.5 L566.6 262.0 L566.7 260.5 L566.7 259.0 L566.8 257.5 L566.8 256.0 L566.9 254.5 L567.0 253.0 L567.1 251.5 L567.2 250.0 L567.3 248.5 L567.4 247.0 L567.6 245.5 L567.7 244.0 L567.9 242.5 L568.1 241.0 L568.3 239.5 L568.5 238.0 L568.7 236.5 L568.9 235.0 L569.2 233.5 L569.5 232.0 L569.7 230.5 L570.0 229.0 L570.3 227.5 L570.7 226.0 L571.0 224.5 L571.4 223.0 L571.8 221.5 L572.2 220.0 L572.6 218.5 L573.0 217.1 L573.5 215.5 L574.0 214.0 L574.5 212.5 L575.0 211.1 L575.6 209.5 L576.2 208.0 L576.9 206.5 L577.5 205.1 L578.3 203.5 L578.6 203.0 M669.5 434.9 L668.0 434.9 L666.5 434.9 L665.0 434.9 L663.5 434.9 L662.0 434.9 L660.5 434.9 L659.0 434.9 L657.5 434.9 L656.0 434.9 L654.5 434.9 L653.0 434.9 L651.5 434.9 L650.0 434.9 L648.5 434.9 L647.0 434.9 L645.5 434.9 L644.0 434.9 L642.5 434.9 L641.0 434.9 L639.5 434.9 L638.0 434.9 L636.5 434.9 L635.0 434.9 L633.5 434.9 L632.0 434.9 L630.5 434.9 L629.0 434.9 L627.5 434.9 L626.0 434.9 L624.5 434.9 L623.0 434.8 L621.5 434.8 L620.0 434.8 L618.5 434.8 L617.0 434.8 L615.5 434.8 L614.0 434.8 L612.5 434.8 L611.0 434.8 L609.5 434.8 L608.0 434.8 L606.5 434.8 L605.0 434.8 L603.5 434.7 L602.0 434.7 L600.5 434.7 L599.0 434.7 L597.5 434.7 L596.0 434.7 L594.5 434.7 L593.0 434.7 L591.5 434.7 L590.0 434.6 L588.5 434.6 L587.0 434.6 L585.5 434.6 L584.0 434.6 L582.5 434.6 L581.0 434.6 L579.5 434.5 L578.0 434.5 L576.5 434.5 L575.0 434.5 L573.5 434.5 L572.0 434.5 L570.5 434.4 L569.0 434.4 L567.5 434.4 L566.0 434.4 L564.5 434.4 L563.0 434.3 L561.5 434.3 L560.0 434.3 L558.5 434.3 L557.0 434.3 L555.5 434.2 L554.0 434.2 L552.5 434.2 L551.0 434.2 L549.5 434.1 L548.0 434.1 L546.5 434.1 L545.0 434.1 L543.5 434.0 L542.0 434.0 L540.5 434.0 L539.0 433.9 L537.5 433.9 L536.0 433.9 L534.5 433.8 L533.0 433.8 L531.5 433.8 L530.0 433.7 L528.5 433.7 L527.0 433.7 L525.5 433.6 L524.0 433.6 L522.5 433.5 L521.0 433.5 L519.5 433.5 L518.0 433.4 L516.5 433.4 L515.0 433.3 L513.5 433.3 L512.0 433.2 L510.5 433.2 L509.0 433.1 L507.5 433.1 L506.0 433.0 L504.5 433.0 L503.0 432.9 L501.5 432.9 L500.0 432.8 L498.5 432.7 L497.0 432.7 L495.5 432.6 L494.0 432.5 L492.5 432.5 L491.0 432.4 L489.5 432.3 L488.0 432.2 L486.5 432.2 L485.0 432.1 L483.5 432.0 L482.0 431.9 L480.5 431.8 L479.0 431.7 L477.5 431.6 L476.0 431.6 L474.5 431.5 L473.0 431.3 L471.5 431.2 L470.0 431.1 L468.5 431.0 L467.0 430.9 L465.5 430.8 L464.0 430.6 L462.5 430.5 L461.0 430.4 L459.5 430.2 L458.0 430.1 L456.5 429.9 L455.0 429.7 L453.5 429.6 L452.0 429.4 L450.5 429.2 L449.0 429.0 L447.5 428.8 L446.0 428.6 L444.5 428.3 L443.0 428.1 L441.5 427.8 L440.0 427.6 L438.5 427.3 L437.0 427.0 L435.5 426.6 L434.0 426.3 L432.5 425.9 L431.0 425.5 L429.5 425.1 L428.0 424.6 L426.5 424.1 L425.0 423.6 L423.5 423.0 L422.0 422.4 L420.5 421.7 L419.0 420.9 L417.5 420.0 L416.0 419.1 L414.5 418.0 L413.2 417.0 L412.1 416.0 L411.0 414.9 L409.7 413.5 L408.5 412.0 L407.5 410.6 L406.5 409.1 L405.6 407.5 L404.8 406.0 L404.1 404.5 L403.5 403.0 L402.9 401.5 L402.4 400.0 L401.9 398.5 L401.4 397.0 L401.0 395.5 L400.6 394.0 L400.3 392.5 L399.9 391.0 L399.6 389.5 L399.3 388.0 L399.1 386.5 L398.8 385.0 L398.6 383.5 L398.3 382.0 L398.1 380.5 L397.9 379.0 L397.7 377.5 L397.5 376.0 L397.3 374.5 L397.2 373.0 L397.0 371.5 L396.9 370.0 L396.7 368.5 L396.6 367.0 L396.5 365.5 L396.3 364.0 L396.2 362.5 L396.1 361.0 L396.0 359.5 L395.9 358.0 L395.8 356.5 L395.7 355.0 L395.6 353.5 L395.5 352.0 L395.4 350.5 L395.3 349.0 L395.3 347.5 L395.2 346.0 L395.1 344.5 L395.1 343.0 L395.0 341.5 L394.9 340.0 L394.9 338.5 L394.8 337.0 L394.8 335.5 L394.7 334.0 L394.6 332.5 L394.6 331.0 L394.5 329.5 L394.5 328.0 L394.5 326.5 L394.4 325.0 L394.4 323.5 L394.3 322.0 L394.3 320.5 L394.3 319.0 L394.2 317.5 L394.2 316.0 L394.2 314.5 L394.1 313.0 L394.1 311.5 L394.1 310.0 L394.0 308.5 L394.0 307.0 L394.0 305.5 L394.0 304.0 L394.0 302.5 L393.9 301.0 L393.9 299.5 L393.9 298.0 L393.9 296.5 L393.9 295.0 L393.8 293.5 L393.8 292.0 L393.8 290.5 L393.8 289.0 L393.8 287.5 L393.8 286.0 L393.8 284.5 L393.8 283.0 L393.8 281.5 L393.8 280.0 L393.8 278.5 L393.7 277.0 L393.7 275.5 L393.7 274.0 L393.7 272.5 L393.7 271.0 L393.7 269.5 L393.7 268.0 L393.7 266.5 L393.7 265.0 L393.8 263.5 L393.8 262.0 L393.8 260.5 L393.8 259.0 L393.8 257.5 L393.8 256.0 L393.8 254.5 L393.8 253.0 L393.8 251.5 L393.8 250.0 L393.9 248.5 L393.9 247.0 L393.9 245.5 L393.9 244.0 L393.9 242.5 L393.9 241.0 L394.0 239.5 L394.0 238.0 L394.0 236.5 L394.0 235.0 L394.1 233.5 L394.1 232.0 L394.1 230.5 L394.2 229.0 L394.2 227.5 L394.2 226.0 L394.3 224.5 L394.3 223.0 L394.3 221.5 L394.4 220.0 L394.4 218.5 L394.5 217.0 L394.5 215.5 L394.6 214.0 L394.6 212.5 L394.7 211.0 L394.7 209.5 L394.8 208.0 L394.8 206.5 L394.9 205.0 L395.0 203.5 L395.0 202.0 L395.1 200.5 L395.2 199.0 L395.3 197.5 L395.3 196.0 L395.4 194.5 L395.5 193.0 L395.6 191.5 L395.7 190.0 L395.8 188.5 L395.9 187.0 L396.1 185.5 L396.2 184.0 L396.3 182.5 L396.4 181.0 L396.6 179.5 L396.7 178.0 L396.9 176.5 L397.0 175.0 L397.2 173.5 L397.4 172.0 L397.6 170.5 L397.8 169.0 L398.0 167.5 L398.3 166.0 L398.5 164.5 L398.8 163.0 L399.1 161.5 L399.4 160.0 L399.7 158.5 L400.1 157.0 L400.4 155.5 L400.9 154.0 L401.3 152.5 L401.8 151.0 L402.3 149.5 L402.9 148.0 L403.5 146.6 L404.3 145.0 L405.0 143.6 L405.9 142.0 L406.9 140.5 L408.0 139.1 L409.0 137.9 L410.3 136.5 L411.5 135.4 L413.0 134.2 L414.5 133.1 L416.0 132.1 L417.5 131.2 L418.9 130.5 L420.5 129.8 L422.0 129.1 L423.5 128.5 L425.0 128.0 L426.5 127.5 L428.0 127.1 L429.5 126.7 L431.0 126.3 L432.5 125.9 L434.0 125.6 L435.5 125.3 L437.0 125.0 L438.5 124.7 L440.0 124.4 L441.5 124.2 L443.0 123.9 L444.5 123.7 L446.0 123.5 L447.5 123.3 L449.0 123.1 L450.5 122.9 L452.0 122.8 L453.5 122.6 L455.0 122.4 L456.5 122.3 L458.0 122.1 L459.5 122.0 L461.0 121.9 L462.5 121.7 L464.0 121.6 L465.5 121.5 L467.0 121.4 L468.5 121.3 L470.0 121.2 L471.5 121.1 L473.0 121.0 L474.5 120.9 L476.0 120.8 L477.5 120.7 L479.0 120.6 L480.5 120.5 L482.0 120.4 L483.5 120.4 L485.0 120.3 L486.5 120.2 L488.0 120.1 L489.5 120.1 L491.0 120.0 L492.5 119.9 L494.0 119.9 L495.5 119.8 L497.0 119.7 L498.5 119.7 L500.0 119.6 L501.5 119.6 L503.0 119.5 L504.5 119.5 L506.0 119.4 L507.5 119.4 L509.0 119.3 L510.5 119.3 L512.0 119.2 L513.5 119.2 L515.0 119.1 L516.5 119.1 L518.0 119.1 L519.5 119.0 L521.0 119.0 L522.5 118.9 L524.0 118.9 L525.5 118.9 L527.0 118.8 L528.5 118.8 L530.0 118.8 L531.5 118.7 L533.0 118.7 L534.5 118.7 L536.0 118.6 L537.5 118.6 L539.0 118.6 L540.5 118.6 L542.0 118.5 L543.5 118.5 L545.0 118.5 L546.5 118.5 L548.0 118.4 L549.5 118.4 L551.0 118.4 L552.5 118.4 L554.0 118.4 L555.5 118.3 L557.0 118.3 L558.5 118.3 L560.0 118.3 L561.5 118.3 L563.0 118.3 L564.5 118.3 L566.0 118.2 L567.5 118.2 L569.0 118.2 L570.5 118.2 L572.0 118.2 L573.5 118.2 L575.0 118.2 L576.5 118.2 L578.0 118.2 L579.5 118.2 L581.0 118.2 L582.5 118.2 L584.0 118.1 L585.5 118.1 L587.0 118.1 L588.5 118.1 L589.5 118.1"/></g>
  <g fill="none" stroke="#b02070" stroke-width="1" shape-rendering="crispEdges"><path d="M142.1 436.5 L142.1 435.0 L142.1 433.5 L142.1 432.0 L142.0 430.5 L142.0 429.0 L142.0 427.5 L142.0 426.0 L142.0 424.5 L141.9 423.0 L141.9 421.5 L141.9 420.0 L141.8 418.5 L141.8 417.0 L141.7 415.5 L141.7 414.0 L141.6 412.5 L141.6 411.0 L141.5 409.5 L141.4 408.0 L141.4 406.5 L141.3 405.0 L141.2 403.5 L141.1 402.0 L141.1 400.5 L141.0 399.0 L140.9 397.5 L140.8 396.0 L140.7 394.5 L140.6 393.0 L140.5 391.5 L140.4 390.0 L140.4 388.5 L140.3 387.0 L140.2 385.5 L140.0 384.0 L139.9 382.5 L139.8 381.0 L139.7 379.5 L139.6 378.0 L139.5 376.5 L139.4 375.0 L139.3 373.5 L139.2 372.0 L139.1 370.5 L139.0 369.0 L138.8 367.5 L138.7 366.0 L138.6 364.5 L138.5 363.0 L138.4 361.5 L138.3 360.0 L138.2 358.5 L138.1 357.0 L138.0 355.5 L137.9 354.0 L137.8 352.5 L137.7 351.0 L137.6 349.5 L137.5 348.0 L137.4 346.5 L137.3 345.0 L137.2 343.5 L137.1 342.0 L137.1 340.5 L137.0 339.0 L136.9 337.5 L136.8 336.0 L136.8 334.5 L136.7 333.0 L136.7 331.5 L136.6 330.0 L136.6 328.5 L136.5 327.0 L136.5 325.5 L136.5 324.0 L136.4 322.5 L136.4 321.0 L136.4 319.5 L136.4 318.0 L136.4 316.5 M642.6 316.5 L642.6 318.0 L642.6 319.5 L642.6 321.0 L642.6 322.5 L642.5 324.0 L642.5 325.5 L642.5 327.0 L642.4 328.5 L642.4 330.0 L642.3 331.5 L642.3 333.0 L642.2 334.5 L642.2 336.0 L642.1 337.5 L642.0 339.0 L641.9 340.5 L641.9 342.0 L641.8 343.5 L641.7 345.0 L641.6 346.5 L641.5 348.0 L641.4 349.5 L641.3 351.0 L641.2 352.5 L641.1 354.0 L641.0 355.5 L640.9 357.0 L640.8 358.5 L640.7 360.0 L640.6 361.5 L640.5 363.0 L640.4 364.5 L640.3 366.0 L640.2 367.5 L640.0 369.0 L639.9 370.5 L639.8 372.0 L639.7 373.5 L639.6 375.0 L639.5 376.5 L639.4 378.0 L639.3 379.5 L639.2 381.0 L639.1 382.5 L639.0 384.0 L638.8 385.5 L638.7 387.0 L638.6 388.5 L638.6 390.0 L638.5 391.5 L638.4 393.0 L638.3 394.5 L638.2 396.0 L638.1 397.5 L638.0 399.0 L637.9 400.5 L637.9 402.0 L637.8 403.5 L637.7 405.0 L637.6 406.5 L637.6 408.0 L637.5 409.5 L637.4 411.0 L637.4 412.5 L637.3 414.0 L637.3 415.5 L637.2 417.0 L637.2 418.5 L637.1 420.0 L637.1 421.5 L637.1 423.0 L637.0 424.5 L637.0 426.0 L637.0 427.5 L637.0 429.0 L637.0 430.5 L636.9 432.0 L636.9 433.5 L636.9 435.0 L636.9 436.5 M176.5 436.5 L176.5 435.0 L176.5 433.5 L176.5 432.0 L176.5 430.5 L176.4 429.0 L176.4 427.5 L176.3 426.0 L176.3 424.5 L176.2 423.0 L176.1 421.5 L176.0 420.0 L175.9 418.5 L175.8 417.0 L175.7 415.5 L175.6 414.0 L175.5 412.5 L175.3 411.0 L175.2 409.5 L175.0 408.0 L174.9 406.5 L174.7 405.0 L174.6 403.5 L174.4 402.0 L174.2 400.5 L174.0 399.0 L173.8 397.5 L173.6 396.0 L173.4 394.5 L173.2 393.0 L172.9 391.5 L172.7 390.0 L172.5 388.5 L172.2 387.0 L172.0 385.5 L171.7 384.0 L171.5 382.5 L171.2 381.0 L170.9 379.5 L170.7 378.0 L170.4 376.5 L170.1 375.0 L169.8 373.5 L169.5 372.0 L169.2 370.5 L168.9 369.0 L168.7 367.5 L168.4 366.0 L168.1 364.5 L167.8 363.0 L167.5 361.5 L167.2 360.0 L166.9 358.5 L166.6 357.0 L166.3 355.5 L166.0 354.0 L165.7 352.5 L165.4 351.0 L165.2 349.5 L164.9 348.0 L164.6 346.5 L164.4 345.0 L164.1 343.5 L163.9 342.0 L163.6 340.5 L163.4 339.0 L163.2 337.5 L163.0 336.0 L162.8 334.5 L162.6 333.0 L162.4 331.5 L162.2 330.0 L162.1 328.5 L162.0 327.0 L161.9 325.5 L161.8 324.0 L161.7 322.5 L161.6 321.0 L161.6 319.5 L161.6 318.0 L161.5 316.5 M617.5 316.5 L617.4 318.0 L617.4 319.5 L617.4 321.0 L617.3 322.5 L617.2 324.0 L617.1 325.5 L617.0 327.0 L616.9 328.5 L616.8 330.0 L616.6 331.5 L616.4 333.0 L616.2 334.5 L616.0 336.0 L615.8 337.5 L615.6 339.0 L615.4 340.5 L615.1 342.0 L614.9 343.5 L614.6 345.0 L614.4 346.5 L614.1 348.0 L613.8 349.5 L613.6 351.0 L613.3 352.5 L613.0 354.0 L612.7 355.5 L612.4 357.0 L612.1 358.5 L611.8 360.0 L611.5 361.5 L611.2 363.0 L610.9 364.5 L610.6 366.0 L610.3 367.5 L610.1 369.0 L609.8 370.5 L609.5 372.0 L609.2 373.5 L608.9 375.0 L608.6 376.5 L608.3 378.0 L608.1 379.5 L607.8 381.0 L607.5 382.5 L607.3 384.0 L607.0 385.5 L606.8 387.0 L606.5 388.5 L606.3 390.0 L606.1 391.5 L605.8 393.0 L605.6 394.5 L605.4 396.0 L605.2 397.5 L605.0 399.0 L604.8 400.5 L604.6 402.0 L604.4 403.5 L604.3 405.0 L604.1 406.5 L604.0 408.0 L603.8 409.5 L603.7 411.0 L603.5 412.5 L603.4 414.0 L603.3 415.5 L603.2 417.0 L603.1 418.5 L603.0 420.0 L602.9 421.5 L602.8 423.0 L602.7 424.5 L602.7 426.0 L602.6 427.5 L602.6 429.0 L602.5 430.5 L602.5 432.0 L602.5 433.5 L602.5 435.0 L602.5 436.5 M216.3 436.5 L216.3 435.0 L216.3 433.5 L216.2 432.0 L216.2 430.5 L216.1 429.0 L216.0 427.5 L215.9 426.0 L215.8 424.5 L215.7 423.0 L215.6 421.5 L215.4 420.0 L215.2 418.5 L215.0 417.0 L214.9 415.5 L214.6 414.0 L214.4 412.5 L214.2 411.0 L213.9 409.5 L213.7 408.0 L213.4 406.5 L213.1 405.0 L212.8 403.5 L212.4 402.0 L212.1 400.5 L211.8 399.0 L211.4 397.5 L211.0 396.0 L210.6 394.5 L210.2 393.0 L209.8 391.5 L209.4 390.0 L208.9 388.5 L208.5 387.0 L208.0 385.5 L207.5 384.0 L207.0 382.5 L206.5 381.0 L206.0 379.5 L205.5 378.1 L204.9 376.5 L204.4 375.0 L203.8 373.5 L203.3 372.0 L202.7 370.5 L202.1 369.0 L201.5 367.6 L200.9 366.0 L200.2 364.5 L199.6 363.0 L199.0 361.6 L198.3 360.0 L197.7 358.5 L197.0 357.0 L196.3 355.5 L195.7 354.0 L195.0 352.5 L194.3 351.0 L193.6 349.5 L192.9 348.0 L192.2 346.5 L191.5 345.0 L190.9 343.5 L190.2 342.0 L189.5 340.5 L188.8 339.0 L188.1 337.5 L187.5 336.0 L186.8 334.5 L186.2 333.0 L185.6 331.5 L185.0 330.0 L184.5 328.6 L184.0 327.1 L183.5 325.6 L183.1 324.0 L182.7 322.5 L182.4 321.0 L182.2 319.5 L182.0 318.0 L182.0 316.5 M597.0 316.5 L597.0 318.0 L596.8 319.5 L596.6 321.0 L596.3 322.5 L595.9 324.0 L595.5 325.5 L595.0 327.0 L594.5 328.5 L594.0 329.9 L593.4 331.5 L592.8 333.0 L592.2 334.5 L591.5 336.0 L590.9 337.5 L590.2 339.0 L589.5 340.5 L588.8 342.0 L588.1 343.5 L587.5 344.9 L586.8 346.5 L586.1 348.0 L585.4 349.5 L584.7 351.0 L584.0 352.5 L583.3 354.0 L582.7 355.5 L582.0 357.0 L581.3 358.5 L580.7 360.0 L580.0 361.5 L579.4 363.0 L578.8 364.5 L578.1 366.0 L577.5 367.5 L576.9 369.0 L576.3 370.5 L575.7 372.0 L575.2 373.5 L574.6 375.0 L574.1 376.5 L573.5 378.0 L573.0 379.5 L572.5 380.9 L572.0 382.4 L571.5 383.9 L571.0 385.5 L570.5 387.0 L570.1 388.5 L569.6 390.0 L569.2 391.5 L568.8 393.0 L568.4 394.5 L568.0 396.0 L567.6 397.5 L567.2 399.0 L566.9 400.5 L566.6 402.0 L566.2 403.5 L565.9 405.0 L565.6 406.5 L565.3 408.0 L565.1 409.5 L564.8 411.0 L564.6 412.5 L564.4 414.0 L564.1 415.5 L564.0 417.0 L563.8 418.5 L563.6 420.0 L563.4 421.5 L563.3 423.0 L563.2 424.5 L563.1 426.0 L563.0 427.5 L562.9 429.0 L562.8 430.5 L562.8 432.0 L562.7 433.5 L562.7 435.0 L562.7 436.5 M270.8 436.5 L270.8 435.0 L270.7 433.5 L270.7 432.0 L270.6 430.5 L270.5 429.0 L270.4 427.5 L270.2 426.0 L270.0 424.5 L269.8 423.0 L269.6 421.5 L269.4 420.0 L269.1 418.5 L268.8 417.0 L268.5 415.5 L268.2 414.0 L267.8 412.5 L267.5 411.0 L267.1 409.5 L266.6 408.0 L266.2 406.5 L265.7 405.0 L265.2 403.5 L264.7 402.0 L264.2 400.5 L263.6 399.0 L263.1 397.5 L262.5 396.0 L261.8 394.5 L261.2 393.0 L260.5 391.5 L259.8 390.0 L259.1 388.5 L258.4 387.0 L257.6 385.5 L256.9 384.0 L256.1 382.5 L255.2 381.0 L254.5 379.7 L253.5 378.0 L252.7 376.5 L251.8 375.0 L250.8 373.5 L250.0 372.2 L249.0 370.6 L248.0 369.1 L247.0 367.6 L246.0 366.2 L245.0 364.7 L244.1 363.5 L243.0 362.0 L242.0 360.6 L241.0 359.3 L240.0 358.0 L239.0 356.7 L238.0 355.5 L237.0 354.2 L236.0 353.0 L235.0 351.8 L234.0 350.6 L233.0 349.4 L232.0 348.3 L231.0 347.1 L230.0 346.0 L228.6 344.5 L227.5 343.3 L226.3 342.0 L225.0 340.6 L224.0 339.5 L222.5 338.0 L221.0 336.5 L219.5 335.0 L218.0 333.6 L216.9 332.5 L215.5 331.2 L214.2 330.0 L213.0 328.9 L211.5 327.6 L210.3 326.5 L209.1 325.5 L207.9 324.5 L206.7 323.5 L205.5 322.5 L204.2 321.5 L203.0 320.6 L201.5 319.5 L200.1 318.5 L198.6 317.5 L197.0 316.5 L195.5 315.6 L194.0 314.9 L192.5 314.3 L191.0 313.9 L189.5 313.8 M589.5 313.8 L588.0 313.9 L586.5 314.3 L585.0 314.9 L583.5 315.6 L582.0 316.5 L580.5 317.4 L579.0 318.4 L577.5 319.5 L576.1 320.5 L574.8 321.5 L573.5 322.5 L572.3 323.5 L571.1 324.5 L569.9 325.5 L568.7 326.5 L567.6 327.5 L566.5 328.5 L565.0 329.8 L563.7 331.0 L562.5 332.1 L561.1 333.5 L559.5 335.0 L558.0 336.5 L556.5 338.0 L555.0 339.5 L554.0 340.6 L552.7 342.0 L551.5 343.3 L550.4 344.5 L549.0 346.0 L548.0 347.1 L547.0 348.3 L546.0 349.4 L545.0 350.6 L544.0 351.8 L543.0 353.0 L542.0 354.2 L541.0 355.5 L540.0 356.7 L539.0 358.0 L538.0 359.3 L537.0 360.6 L536.0 362.0 L535.0 363.4 L534.0 364.7 L533.1 366.0 L532.1 367.5 L531.1 369.0 L530.1 370.5 L529.1 372.0 L528.2 373.5 L527.2 375.0 L526.3 376.5 L525.5 377.9 L524.6 379.5 L523.8 381.0 L523.0 382.4 L522.1 384.0 L521.4 385.5 L520.6 387.0 L519.9 388.5 L519.2 390.0 L518.5 391.5 L517.8 393.0 L517.2 394.5 L516.5 396.0 L515.9 397.5 L515.4 399.0 L514.8 400.5 L514.3 402.0 L513.8 403.5 L513.3 405.0 L512.8 406.5 L512.4 408.0 L511.9 409.5 L511.5 411.0 L511.2 412.5 L510.8 414.0 L510.5 415.5 L510.2 417.0 L509.9 418.5 L509.6 420.0 L509.4 421.5 L509.2 423.0 L509.0 424.5 L508.8 426.0 L508.6 427.5 L508.5 429.0 L508.4 430.5 L508.3 432.0 L508.3 433.5 L508.2 435.0 L508.2 436.5 M589.5 294.7 L588.0 294.7 L586.5 294.7 L585.0 294.8 L583.5 294.9 L582.0 295.0 L580.5 295.2 L579.0 295.4 L577.5 295.6 L576.0 295.8 L574.5 296.1 L573.0 296.3 L571.5 296.6 L570.0 297.0 L568.5 297.3 L567.0 297.7 L565.5 298.1 L564.0 298.5 L562.5 298.9 L561.0 299.3 L559.5 299.7 L558.0 300.2 L556.5 300.7 L555.0 301.2 L553.5 301.7 L552.0 302.2 L550.5 302.7 L549.0 303.2 L547.5 303.8 L546.0 304.3 L544.5 304.9 L543.0 305.5 L541.5 306.1 L540.0 306.7 L538.5 307.3 L537.0 307.9 L535.5 308.5 L534.0 309.1 L532.5 309.8 L531.0 310.4 L529.5 311.1 L528.0 311.7 L526.5 312.4 L525.0 313.1 L523.5 313.7 L522.0 314.4 L520.5 315.1 L519.0 315.8 L517.6 316.5 L516.0 317.2 L514.5 318.0 L513.0 318.7 L511.5 319.4 L510.0 320.2 L508.5 320.9 L507.0 321.6 L505.5 322.4 L504.0 323.2 L502.5 323.9 L501.0 324.7 L499.5 325.5 L498.0 326.2 L496.5 327.0 L495.0 327.8 L493.5 328.6 L492.0 329.4 L490.5 330.2 L489.0 331.0 L487.5 331.8 L486.0 332.6 L484.5 333.4 L483.0 334.3 L481.6 335.0 L480.0 335.9 L478.5 336.7 L477.1 337.5 L475.5 338.4 L474.0 339.2 L472.6 340.0 L471.0 340.9 L469.5 341.7 L468.1 342.5 L466.5 343.4 L465.0 344.2 L463.6 345.0 L462.0 345.9 L460.5 346.7 L459.1 347.5 L457.5 348.4 L456.0 349.2 L454.6 350.0 L453.0 350.9 L451.5 351.7 L450.0 352.5 L448.5 353.3 L447.0 354.1 L445.5 354.9 L444.0 355.7 L442.5 356.5 L441.0 357.2 L439.5 358.0 L438.0 358.7 L436.5 359.5 L435.0 360.2 L433.5 360.9 L432.0 361.6 L430.5 362.3 L429.0 363.0 L427.5 363.6 L426.0 364.3 L424.5 364.9 L423.0 365.5 L421.5 366.1 L420.0 366.7 L418.5 367.2 L417.0 367.8 L415.5 368.3 L414.0 368.7 L412.5 369.2 L411.0 369.6 L409.5 370.0 L408.0 370.4 L406.5 370.8 L405.0 371.1 L403.5 371.4 L402.0 371.7 L400.5 371.9 L399.0 372.1 L397.5 372.3 L396.0 372.5 L394.5 372.6 L393.0 372.7 L391.5 372.7 L390.0 372.8 L388.5 372.8 L387.0 372.7 L385.5 372.7 L384.0 372.6 L382.5 372.4 L381.0 372.3 L379.5 372.1 L378.0 371.8 L376.5 371.6 L375.0 371.3 L373.5 371.0 L372.0 370.7 L370.5 370.3 L369.0 369.9 L367.5 369.5 L366.0 369.0 L364.5 368.6 L363.0 368.1 L361.5 367.6 L360.0 367.0 L358.5 366.5 L357.0 365.9 L355.5 365.3 L354.0 364.7 L352.5 364.1 L351.0 363.4 L349.5 362.8 L348.0 362.1 L346.5 361.4 L345.0 360.7 L343.6 360.0 L342.0 359.2 L340.5 358.5 L339.0 357.7 L337.6 357.0 L336.0 356.2 L334.7 355.5 L333.0 354.6 L331.5 353.8 L330.0 353.0 L328.5 352.2 L327.2 351.5 L325.5 350.6 L324.0 349.8 L322.6 349.0 L321.0 348.1 L319.5 347.3 L318.1 346.5 L316.5 345.6 L315.0 344.8 L313.6 344.0 L312.0 343.1 L310.5 342.3 L309.1 341.5 L307.5 340.6 L306.0 339.8 L304.6 339.0 L303.0 338.1 L301.5 337.3 L300.1 336.5 L298.5 335.6 L297.0 334.8 L295.5 334.0 L294.0 333.2 L292.5 332.4 L291.0 331.5 L289.5 330.7 L288.1 330.0 L286.5 329.1 L285.0 328.3 L283.5 327.5 L282.0 326.8 L280.5 326.0 L279.0 325.2 L277.6 324.5 L276.0 323.7 L274.5 322.9 L273.0 322.1 L271.5 321.4 L270.0 320.6 L268.5 319.9 L267.0 319.2 L265.6 318.5 L264.0 317.7 L262.5 317.0 L261.0 316.3 L259.5 315.6 L258.0 314.9 L256.5 314.2 L255.0 313.5 L253.5 312.8 L252.0 312.2 L250.5 311.5 L249.0 310.9 L247.5 310.2 L246.0 309.6 L244.5 308.9 L243.0 308.3 L241.5 307.7 L240.0 307.1 L238.6 306.5 L237.0 305.9 L235.5 305.3 L234.0 304.7 L232.5 304.2 L231.0 303.6 L229.5 303.1 L228.0 302.5 L226.5 302.0 L225.0 301.5 L223.5 301.0 L222.0 300.5 L220.5 300.1 L219.0 299.6 L217.5 299.2 L216.0 298.7 L214.5 298.3 L213.0 297.9 L211.5 297.5 L210.0 297.2 L208.5 296.9 L207.0 296.5 L205.5 296.2 L204.0 296.0 L202.5 295.7 L201.0 295.5 L199.5 295.3 L198.0 295.1 L196.5 295.0 L195.0 294.9 L193.5 294.8 L192.0 294.7 L190.5 294.7 L189.5 294.7 M589.5 267.8 L588.0 267.8 L586.5 267.8 L585.0 267.8 L583.5 267.8 L582.0 267.8 L580.5 267.8 L579.0 267.8 L577.5 267.8 L576.0 267.9 L574.5 267.9 L573.0 267.9 L571.5 267.9 L570.0 268.0 L568.5 268.0 L567.0 268.0 L565.5 268.0 L564.0 268.1 L562.5 268.1 L561.0 268.1 L559.5 268.2 L558.0 268.2 L556.5 268.3 L555.0 268.3 L553.5 268.3 L552.0 268.4 L550.5 268.4 L549.0 268.4 L547.5 268.5 L546.0 268.5 L544.5 268.6 L543.0 268.6 L541.5 268.6 L540.0 268.7 L538.5 268.7 L537.0 268.7 L535.5 268.8 L534.0 268.8 L532.5 268.9 L531.0 268.9 L529.5 268.9 L528.0 269.0 L526.5 269.0 L525.0 269.0 L523.5 269.1 L522.0 269.1 L520.5 269.1 L519.0 269.1 L517.5 269.2 L516.0 269.2 L514.5 269.2 L513.0 269.2 L511.5 269.3 L510.0 269.3 L508.5 269.3 L507.0 269.3 L505.5 269.4 L504.0 269.4 L502.5 269.4 L501.0 269.4 L499.5 269.4 L498.0 269.4 L496.5 269.5 L495.0 269.5 L493.5 269.5 L492.0 269.5 L490.5 269.5 L489.0 269.5 L487.5 269.5 L486.0 269.5 L484.5 269.5 L483.0 269.5 L481.5 269.5 L480.0 269.5 L478.5 269.6 L477.0 269.6 L475.5 269.6 L474.0 269.6 L472.5 269.6 L471.0 269.6 L469.5 269.6 L468.0 269.6 L466.5 269.6 L465.0 269.6 L463.5 269.6 L462.0 269.6 L460.5 269.6 L459.0 269.5 L457.5 269.5 L456.0 269.5 L454.5 269.5 L453.0 269.5 L451.5 269.5 L450.0 269.5 L448.5 269.5 L447.0 269.5 L445.5 269.5 L444.0 269.5 L442.5 269.5 L441.0 269.5 L439.5 269.5 L438.0 269.5 L436.5 269.5 L435.0 269.4 L433.5 269.4 L432.0 269.4 L430.5 269.4 L429.0 269.4 L427.5 269.4 L426.0 269.4 L424.5 269.4 L423.0 269.4 L421.5 269.4 L420.0 269.4 L418.5 269.4 L417.0 269.4 L415.5 269.3 L414.0 269.3 L412.5 269.3 L411.0 269.3 L409.5 269.3 L408.0 269.3 L406.5 269.3 L405.0 269.3 L403.5 269.3 L402.0 269.3 L400.5 269.3 L399.0 269.3 L397.5 269.3 L396.0 269.3 L394.5 269.3 L393.0 269.3 L391.5 269.3 L390.0 269.3 L388.5 269.3 L387.0 269.3 L385.5 269.3 L384.0 269.3 L382.5 269.3 L381.0 269.3 L379.5 269.3 L378.0 269.3 L376.5 269.3 L375.0 269.3 L373.5 269.3 L372.0 269.3 L370.5 269.3 L369.0 269.3 L367.5 269.3 L366.0 269.3 L364.5 269.3 L363.0 269.3 L361.5 269.4 L360.0 269.4 L358.5 269.4 L357.0 269.4 L355.5 269.4 L354.0 269.4 L352.5 269.4 L351.0 269.4 L349.5 269.4 L348.0 269.4 L346.5 269.4 L345.0 269.4 L343.5 269.4 L342.0 269.5 L340.5 269.5 L339.0 269.5 L337.5 269.5 L336.0 269.5 L334.5 269.5 L333.0 269.5 L331.5 269.5 L330.0 269.5 L328.5 269.5 L327.0 269.5 L325.5 269.5 L324.0 269.5 L322.5 269.5 L321.0 269.5 L319.5 269.5 L318.0 269.6 L316.5 269.6 L315.0 269.6 L313.5 269.6 L312.0 269.6 L310.5 269.6 L309.0 269.6 L307.5 269.6 L306.0 269.6 L304.5 269.6 L303.0 269.6 L301.5 269.6 L300.0 269.6 L298.5 269.5 L297.0 269.5 L295.5 269.5 L294.0 269.5 L292.5 269.5 L291.0 269.5 L289.5 269.5 L288.0 269.5 L286.5 269.5 L285.0 269.5 L283.5 269.5 L282.0 269.4 L280.5 269.4 L279.0 269.4 L277.5 269.4 L276.0 269.4 L274.5 269.4 L273.0 269.3 L271.5 269.3 L270.0 269.3 L268.5 269.3 L267.0 269.3 L265.5 269.2 L264.0 269.2 L262.5 269.2 L261.0 269.2 L259.5 269.1 L258.0 269.1 L256.5 269.1 L255.0 269.0 L253.5 269.0 L252.0 269.0 L250.5 268.9 L249.0 268.9 L247.5 268.9 L246.0 268.8 L244.5 268.8 L243.0 268.8 L241.5 268.7 L240.0 268.7 L238.5 268.7 L237.0 268.6 L235.5 268.6 L234.0 268.5 L232.5 268.5 L231.0 268.5 L229.5 268.4 L228.0 268.4 L226.5 268.4 L225.0 268.3 L223.5 268.3 L222.0 268.2 L220.5 268.2 L219.0 268.2 L217.5 268.1 L216.0 268.1 L214.5 268.1 L213.0 268.0 L211.5 268.0 L210.0 268.0 L208.5 267.9 L207.0 267.9 L205.5 267.9 L204.0 267.9 L202.5 267.8 L201.0 267.8 L199.5 267.8 L198.0 267.8 L196.5 267.8 L195.0 267.8 L193.5 267.8 L192.0 267.8 L190.5 267.8 L189.5 267.8 M589.5 239.9 L588.0 239.9 L586.5 239.9 L585.0 239.8 L583.5 239.8 L582.0 239.7 L580.5 239.6 L579.0 239.5 L577.5 239.4 L576.0 239.3 L574.5 239.1 L573.0 239.0 L571.5 238.8 L570.0 238.6 L568.5 238.4 L567.0 238.2 L565.5 237.9 L564.0 237.7 L562.5 237.4 L561.0 237.1 L559.5 236.8 L558.0 236.5 L556.5 236.2 L555.0 235.9 L553.5 235.5 L552.0 235.2 L550.5 234.8 L549.0 234.4 L547.5 234.0 L546.0 233.6 L544.5 233.2 L543.0 232.7 L541.5 232.3 L540.0 231.8 L538.5 231.4 L537.0 230.9 L535.5 230.4 L534.0 229.9 L532.5 229.4 L531.0 228.8 L529.5 228.3 L528.0 227.7 L526.5 227.2 L525.0 226.6 L523.5 226.0 L522.0 225.4 L520.5 224.8 L519.0 224.2 L517.5 223.6 L516.1 223.0 L514.5 222.3 L513.0 221.6 L511.5 221.0 L510.0 220.3 L508.5 219.6 L507.0 218.9 L505.5 218.2 L504.0 217.5 L502.5 216.8 L501.0 216.0 L499.5 215.3 L498.0 214.5 L496.5 213.8 L495.0 213.0 L493.5 212.2 L492.0 211.4 L490.5 210.6 L489.0 209.8 L487.6 209.0 L486.0 208.1 L484.5 207.3 L483.1 206.5 L481.5 205.6 L480.0 204.7 L478.5 203.9 L477.0 203.0 L475.5 202.1 L474.0 201.2 L472.5 200.3 L471.1 199.5 L469.5 198.5 L468.0 197.6 L466.5 196.7 L465.0 195.7 L463.5 194.8 L462.2 194.0 L460.6 193.0 L459.0 192.0 L457.5 191.0 L456.0 190.1 L454.5 189.1 L453.0 188.2 L451.5 187.2 L450.0 186.2 L448.5 185.3 L447.0 184.3 L445.7 183.5 L444.1 182.5 L442.6 181.5 L441.0 180.5 L439.5 179.6 L438.0 178.6 L436.5 177.7 L435.0 176.8 L433.5 175.8 L432.1 175.0 L430.5 174.0 L429.0 173.1 L427.5 172.3 L426.2 171.5 L424.5 170.5 L423.0 169.7 L421.7 169.0 L420.0 168.1 L418.5 167.3 L417.0 166.6 L415.5 165.9 L414.0 165.2 L412.5 164.5 L411.0 163.9 L409.5 163.3 L408.0 162.7 L406.5 162.2 L405.0 161.7 L403.5 161.2 L402.0 160.8 L400.5 160.5 L399.0 160.1 L397.5 159.9 L396.0 159.6 L394.5 159.4 L393.0 159.3 L391.5 159.2 L390.0 159.2 L388.5 159.2 L387.0 159.2 L385.5 159.3 L384.0 159.5 L382.5 159.7 L381.0 159.9 L379.5 160.2 L378.0 160.6 L376.5 161.0 L375.0 161.4 L373.5 161.9 L372.0 162.4 L370.5 162.9 L369.0 163.5 L367.5 164.1 L366.0 164.7 L364.5 165.4 L363.0 166.1 L361.5 166.8 L360.0 167.6 L358.5 168.4 L357.0 169.2 L355.5 170.0 L354.0 170.8 L352.5 171.7 L351.1 172.5 L349.5 173.4 L348.0 174.3 L346.5 175.2 L345.0 176.1 L343.6 177.0 L342.0 178.0 L340.5 178.9 L339.0 179.9 L337.5 180.8 L336.0 181.8 L334.5 182.7 L333.0 183.7 L331.7 184.5 L330.2 185.5 L328.6 186.5 L327.0 187.5 L325.5 188.5 L324.0 189.4 L322.5 190.4 L321.0 191.3 L319.5 192.3 L318.0 193.2 L316.5 194.2 L315.2 195.0 L313.6 196.0 L312.0 197.0 L310.5 197.9 L309.0 198.8 L307.5 199.7 L306.2 200.5 L304.5 201.5 L303.0 202.4 L301.5 203.3 L300.0 204.2 L298.5 205.0 L297.0 205.9 L295.5 206.7 L294.1 207.5 L292.5 208.4 L291.0 209.2 L289.6 210.0 L288.0 210.9 L286.5 211.7 L285.0 212.5 L283.5 213.2 L282.0 214.0 L280.5 214.8 L279.0 215.5 L277.5 216.3 L276.0 217.0 L274.5 217.7 L273.0 218.4 L271.5 219.1 L270.0 219.8 L268.6 220.5 L267.0 221.2 L265.5 221.9 L264.0 222.5 L262.5 223.2 L261.0 223.8 L259.5 224.4 L258.1 225.0 L256.5 225.6 L255.0 226.2 L253.5 226.8 L252.0 227.4 L250.5 227.9 L249.0 228.5 L247.5 229.0 L246.1 229.5 L244.7 230.0 L243.2 230.5 L241.6 231.0 L240.1 231.5 L238.5 232.0 L237.0 232.4 L235.5 232.9 L234.0 233.3 L232.5 233.7 L231.0 234.1 L229.5 234.5 L228.0 234.9 L226.5 235.3 L225.0 235.6 L223.5 236.0 L222.0 236.3 L220.5 236.6 L219.0 236.9 L217.5 237.2 L216.0 237.5 L214.5 237.7 L213.0 238.0 L211.5 238.2 L210.0 238.4 L208.5 238.6 L207.0 238.8 L205.5 239.0 L204.0 239.2 L202.5 239.3 L201.0 239.4 L199.5 239.5 L198.0 239.6 L196.5 239.7 L195.0 239.8 L193.5 239.8 L192.0 239.9 L190.5 239.9 L189.5 239.9 M271.9 116.5 L271.9 118.0 L271.9 119.5 L271.8 121.0 L271.7 122.5 L271.6 124.0 L271.4 125.5 L271.3 127.0 L271.1 128.5 L270.9 130.0 L270.6 131.5 L270.4 133.0 L270.1 134.5 L269.7 136.0 L269.4 137.5 L269.0 139.0 L268.6 140.5 L268.2 142.0 L267.8 143.5 L267.3 145.0 L266.8 146.5 L266.3 148.0 L265.7 149.5 L265.1 151.0 L264.5 152.5 L263.9 154.0 L263.2 155.5 L262.6 157.0 L261.8 158.5 L261.1 160.0 L260.3 161.5 L259.5 163.0 L258.7 164.5 L257.9 166.0 L257.0 167.5 L256.1 169.0 L255.1 170.5 L254.2 172.0 L253.2 173.5 L252.1 175.0 L251.1 176.5 L250.0 178.0 L249.0 179.3 L248.0 180.6 L247.0 181.9 L246.0 183.1 L245.0 184.3 L244.0 185.5 L243.0 186.6 L241.8 188.0 L240.5 189.4 L239.4 190.5 L238.0 192.0 L236.5 193.4 L235.4 194.5 L234.0 195.8 L232.7 197.0 L231.5 198.0 L230.4 199.0 L229.2 200.0 L228.0 200.9 L226.6 202.0 L225.3 203.0 L224.0 204.0 L222.5 205.0 L221.0 206.0 L219.5 207.0 L218.0 207.9 L216.5 208.8 L215.0 209.6 L213.5 210.4 L212.0 211.2 L210.5 211.9 L209.1 212.5 L207.5 213.1 L206.0 213.7 L204.5 214.2 L203.0 214.7 L201.5 215.1 L200.0 215.5 L198.5 215.8 L197.0 216.1 L195.5 216.3 L194.0 216.5 L192.5 216.6 L191.0 216.7 L189.5 216.7 M589.5 216.7 L588.0 216.7 L586.5 216.6 L585.0 216.5 L583.5 216.3 L582.0 216.1 L580.5 215.8 L579.0 215.5 L577.5 215.1 L576.0 214.7 L574.5 214.2 L573.0 213.7 L571.5 213.1 L570.0 212.5 L568.5 211.9 L567.0 211.2 L565.7 210.5 L564.0 209.6 L562.5 208.8 L561.1 208.0 L559.5 207.0 L558.0 206.0 L556.5 205.0 L555.0 204.0 L553.7 203.0 L552.4 202.0 L551.1 201.0 L549.8 200.0 L548.6 199.0 L547.5 198.0 L546.3 197.0 L545.0 195.8 L543.6 194.5 L542.5 193.4 L541.0 192.0 L539.6 190.5 L538.5 189.4 L537.2 188.0 L536.0 186.6 L535.0 185.5 L534.0 184.3 L533.0 183.1 L532.0 181.9 L531.0 180.6 L530.0 179.3 L529.0 178.0 L528.0 176.6 L527.0 175.2 L526.0 173.8 L525.2 172.5 L524.2 171.0 L523.2 169.5 L522.3 168.0 L521.5 166.6 L520.6 165.0 L519.7 163.5 L519.0 162.1 L518.1 160.5 L517.4 159.0 L516.7 157.5 L516.0 156.0 L515.3 154.5 L514.7 153.0 L514.1 151.5 L513.5 150.1 L512.9 148.5 L512.4 147.0 L511.9 145.5 L511.4 144.0 L510.9 142.5 L510.5 141.0 L510.1 139.5 L509.7 138.0 L509.4 136.5 L509.0 135.0 L508.7 133.5 L508.5 132.0 L508.2 130.5 L508.0 129.0 L507.8 127.5 L507.6 126.0 L507.5 124.5 L507.3 123.0 L507.2 121.5 L507.2 120.0 L507.1 118.5 L507.1 117.0 L507.1 116.5 M225.1 116.5 L225.1 118.0 L225.1 119.5 L225.0 121.0 L225.0 122.5 L224.9 124.0 L224.8 125.5 L224.7 127.0 L224.6 128.5 L224.5 130.0 L224.3 131.5 L224.2 133.0 L224.0 134.5 L223.8 136.0 L223.6 137.5 L223.4 139.0 L223.2 140.5 L222.9 142.0 L222.7 143.5 L222.4 145.0 L222.1 146.5 L221.8 148.0 L221.5 149.5 L221.1 151.0 L220.8 152.5 L220.4 154.0 L220.0 155.5 L219.6 157.0 L219.2 158.5 L218.7 160.0 L218.3 161.5 L217.8 163.0 L217.3 164.5 L216.8 166.0 L216.3 167.5 L215.7 169.0 L215.1 170.5 L214.5 172.0 L213.9 173.5 L213.3 175.0 L212.6 176.5 L212.0 177.9 L211.3 179.5 L210.5 181.0 L209.7 182.5 L209.0 183.9 L208.1 185.5 L207.2 187.0 L206.3 188.5 L205.3 190.0 L204.2 191.5 L203.1 193.0 L202.0 194.3 L201.0 195.5 L200.5 196.0 M578.5 196.0 L577.1 194.5 L576.0 193.1 L575.0 191.8 L574.1 190.5 L573.0 189.0 L572.1 187.5 L571.2 186.0 L570.3 184.5 L569.5 183.0 L568.7 181.5 L568.0 180.0 L567.3 178.5 L566.6 177.0 L565.9 175.5 L565.3 174.0 L564.7 172.5 L564.1 171.0 L563.5 169.6 L562.9 168.0 L562.4 166.5 L561.9 165.0 L561.4 163.5 L560.9 162.0 L560.4 160.5 L560.0 159.1 L559.6 157.5 L559.1 156.0 L558.7 154.5 L558.4 153.0 L558.0 151.5 L557.7 150.0 L557.3 148.5 L557.0 147.0 L556.7 145.5 L556.4 144.0 L556.2 142.5 L555.9 141.0 L555.7 139.5 L555.4 138.0 L555.2 136.5 L555.0 135.0 L554.9 133.5 L554.7 132.0 L554.6 130.5 L554.4 129.0 L554.3 127.5 L554.2 126.0 L554.1 124.5 L554.1 123.0 L554.0 121.5 L554.0 120.0 L553.9 118.5 L553.9 117.0 L553.9 116.5"/></g>
  <rect x="109" y="116" width="81" height="81" fill="#000"/>
  <rect x="589" y="116" width="81" height="81" fill="#000"/>
  <rect x="29" y="316" width="81" height="121" fill="#949494"/>
  <rect x="669" y="316" width="81" height="121" fill="#949494"/>
  <g id="labels" font-family="Liberation Sans" font-size="14.5" fill="#c8107a">
    <text x="211.8" y="173.7">.90</text>
    <text x="257.4" y="163.5">.80</text>
    <text x="360.4" y="268">.60</text>
    <text x="234.4" y="351.1">.40</text>
    <text x="209.4" y="389.6">.30</text>
    <text x="138.9" y="395.6">.10</text>
    <text x="555.3" y="141.6">.90</text>
    <text x="531.1" y="180.5">.80</text>
    <text x="546.5" y="233.3">.70</text>
    <text x="508.9" y="318.3">.50</text>
    <text x="511.8" y="408.5">.40</text>
    <text x="567.4" y="395.8">.30</text>
    <text x="604" y="408.5">.20</text>
    <text x="637.3" y="383">.10</text>
  </g>
  <!-- hand cursor -->
  <path d="M647.5 541 Q647.5 539.5 649 539.5 Q650.5 539.5 650.5 541 V546 Q651 544.5 652.5 544.5 Q654 544.5 654 546 Q654.5 545 656 545 Q657.5 545 657.5 546.5 Q658 546 659 546 Q660 546.5 660 548 V556 Q660 562.5 654 562.5 H652 Q648.5 562.5 646 559 L642.5 554.5 Q641.8 553 643 552.3 Q644.5 551.5 646 553 L647.5 554.5 Z" fill="#fff" stroke="#000" stroke-width="1.2"/>
  <path d="M650.5 546 V551 M654 546 V551 M657.5 546.5 V551" stroke="#000" stroke-width="1"/>
</svg>

<!-- scrollbars -->
<div class="abs" id="vscroll"></div>
<svg class="abs" style="left:764px;top:108px" width="16" height="522">
  <path d="M4.5 11 L8 7.5 L11.5 11" fill="none" stroke="#2e3436" stroke-width="1.6"/>
  <rect x="5" y="314" width="6" height="55" rx="3" fill="#7b7b7b"/>
  <path d="M4.5 512 L8 515.5 L11.5 512" fill="none" stroke="#2e3436" stroke-width="1.6"/>
</svg>
<div class="abs" id="hscroll"></div>
<svg class="abs" style="left:0;top:630px" width="764" height="16">
  <path d="M11 4.5 L7.5 8 L11 11.5" fill="none" stroke="#2e3436" stroke-width="1.6"/>
  <rect x="205" y="5" width="131" height="6" rx="3" fill="#7b7b7b"/>
  <path d="M754 4.5 L757.5 8 L754 11.5" fill="none" stroke="#2e3436" stroke-width="1.6"/>
</svg>
<div class="abs" id="corner"></div>

<!-- status -->
<div class="abs" id="status"></div>
<div class="abs panel" style="left:2px;width:122px"></div>
<div class="abs panel" style="left:125px;width:201px;padding-left:6px">Laplace(4:2)</div>
<div class="abs panel" style="left:327px;width:153px;padding-left:4px">× 4.0</div>
<div class="abs panel" style="left:481px;width:296px;padding-left:1px">Resistance: 1.23909518814</div>
</body></html>
